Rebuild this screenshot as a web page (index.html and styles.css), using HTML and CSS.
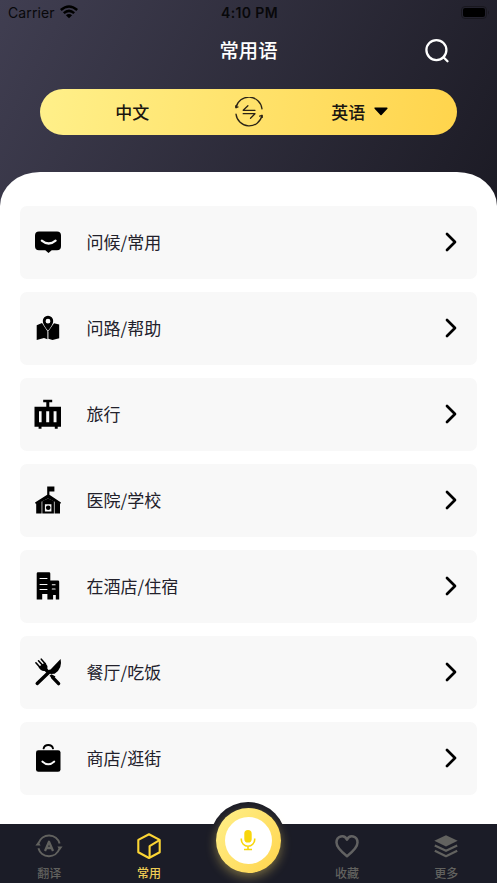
FILE: index.html
```html
<!DOCTYPE html>
<html lang="zh-CN">
<head>
<meta charset="utf-8">
<title>常用语</title>
<link rel="stylesheet" href="styles.css">
</head>
<body>
<div class="app">
  <div class="status">
    <div class="carrier"><span>Carrier</span>
      <svg width="18" height="14" viewBox="0 0 18 14" fill="none" stroke="#000" stroke-width="2.5"><path d="M.8 5Q9-2 17.2 5M3.8 8.1Q9 3.7 14.2 8.1"/><path d="M9 13.3 5.9 10.3Q9 7.9 12.1 10.3Z" fill="#000" stroke="none"/></svg>
    </div>
    <div class="time">4:10 PM</div>
    <svg class="battery" width="30" height="13" viewBox="0 0 30 13"><rect x=".5" y=".5" width="25" height="12" rx="3.5" fill="none" stroke="#19181f"/><rect x="2" y="2" width="22" height="9" rx="2" fill="#000"/><path d="M27 4.5q2 2 0 4z" fill="#19181f"/></svg>
  </div>
  <header class="header">
    <h1>常用语</h1>
    <svg class="search" width="26" height="26" viewBox="0 0 26 26" fill="none" stroke="#fff" stroke-width="2.3" stroke-linecap="round"><circle cx="12.4" cy="12.1" r="10"/><path d="m19.5 19.3 4 4"/></svg>
  </header>
  <div class="languages">
    <span class="lang">中文</span>
    <svg width="30" height="30" viewBox="0 0 30 30" fill="none" stroke="#2b2417" stroke-width="1.3" stroke-linecap="round" stroke-linejoin="round"><path d="M2 10.5A13.2 13.2 0 0 1 28 11.8M28 18.5A13.2 13.2 0 0 1 2 17.2"/><path d="m1.7 8.8.3 1.9 2-.8M28.3 20.3 28 18.4l-2.3.8"/><path d="M21 13.3H9.2l4.7-4.6M9.2 16.7H21l-4.5 4.5"/></svg>
    <span class="lang lang-to">英语<svg width="14" height="9" viewBox="0 0 14 9"><path d="M1.2 1.2h11.6L7 7.4Z" stroke="#000" stroke-width="1.6" stroke-linejoin="round"/></svg></span>
  </div>
  <main class="panel">
    <div class="row">
      <svg class="icon" viewBox="0 0 36 36"><path d="M9 7.4h18q4 0 4 4v10.8q0 4-4 4h-5.3L18.5 29l-3.2-2.8H9q-4 0-4-4V11.4q0-4 4-4Z"/><path class="light-line" stroke-width="2.2" d="M11.8 16.6q6.9 5.8 13.8 0"/></svg>
      <span class="label">问候/常用</span><svg class="chevron" viewBox="0 0 14 22"><path d="m3 3 8 8-8 8"/></svg>
    </div>
    <div class="row">
      <svg class="icon" viewBox="0 0 36 36"><path d="M6.7 15.2 12 13l5.4 8.2v8L14 28l-7.3 2Z"/><path d="m24 13.3 5.2 1.1v13.8L22.5 30l-4.1-1.3v-7.5Z"/><path fill-rule="evenodd" d="M18 5.8a5.2 5.2 0 0 1 5.2 5.3q0 3.6-5.2 9.7-5.2-6.1-5.2-9.7A5.2 5.2 0 0 1 18 5.8Zm0 3a2.4 2.4 0 1 0 0 4.8 2.4 2.4 0 0 0 0-4.8Z"/></svg>
      <span class="label">问路/帮助</span><svg class="chevron" viewBox="0 0 14 22"><path d="m3 3 8 8-8 8"/></svg>
    </div>
    <div class="row">
      <svg class="icon" viewBox="0 0 36 36"><path fill-rule="evenodd" d="M13.2 3.7h9v2.5h-2.9v4.5H31v20h-3.3v2h-2.9v-2H11.5v2H8.6v-2H4.5v-20h11.8V6.2h-3.1ZM9 15.2v11h2.6v-11Zm7.2 0v11h3v-11Zm7.4 0v11h2.9v-11Z"/></svg>
      <span class="label">旅行</span><svg class="chevron" viewBox="0 0 14 22"><path d="m3 3 8 8-8 8"/></svg>
    </div>
    <div class="row">
      <svg class="icon" viewBox="0 0 36 36"><path d="M17.2 4.6h7.2v5h-5v3.2L31 20.4l-1 1.8-12-5.6-12 5.6-1-1.8 12.2-7.6Z"/><path d="M6.2 21.7 11.6 19v12.4H6.2Zm23.8 0-5.4-2.7v12.4H30Z"/><path fill-rule="evenodd" d="m12.3 19 5.8-2.4 5.8 2.4v12.4H12.3Zm2.6 3.2v7.2h6.5v-7.2Z"/><circle cx="18.2" cy="25.7" r="2.3"/></svg>
      <span class="label">医院/学校</span><svg class="chevron" viewBox="0 0 14 22"><path d="m3 3 8 8-8 8"/></svg>
    </div>
    <div class="row">
      <svg class="icon" viewBox="0 0 36 36"><path d="M8 4.3h11q1.3 0 1.3 1.3v7H28q1.2 0 1.2 1.2v17.7h-3.4v-4.4h-2.7v4.4h-5.7v-5.6h-5.2v5.6H6.7V5.6q0-1.3 1.3-1.3Z"/><path class="light-line" stroke-width="1.1" d="M10 10.5h7M10 16.5h7m-7 5h7m5.3-4.8h2.8m-2.8 4.3h2.8"/></svg>
      <span class="label">在酒店/住宿</span><svg class="chevron" viewBox="0 0 14 22"><path d="m3 3 8 8-8 8"/></svg>
    </div>
    <div class="row">
      <svg class="icon" viewBox="0 0 36 36"><g fill="none" stroke="#000" stroke-linecap="round"><path stroke-width="3.4" d="m22.6 23.4 6 6.2"/><path stroke-width="3.4" d="M7.2 29.4 20 17.3"/><path stroke-width="1.6" d="m5.9 8.8 4.9 5.5M8.5 6.8l4.7 5.1M11.3 5.2l4.1 4.8"/></g><path d="m8.5 13 6.5-4.5q3 3 2.4 6.2l2.6 2.8-2.4 2.3-3-2.8Q11 17.5 8.5 13ZM30.6 5q2.2 9.4-6 14.8l-4 .2-2.2-2.3Z"/><path d="m19.5 21.7 2-1.5 4 2.4-2.8 2.5Z"/></svg>
      <span class="label">餐厅/吃饭</span><svg class="chevron" viewBox="0 0 14 22"><path d="m3 3 8 8-8 8"/></svg>
    </div>
    <div class="row">
      <svg class="icon" viewBox="0 0 36 36"><rect x="6" y="10.2" width="24.5" height="21.6" rx="2.4"/><path fill="none" stroke="#000" stroke-width="1.9" stroke-linecap="round" d="M13.6 8.4Q14.5 5 18.3 5T23 8.4"/><path class="light-line" stroke-width="1.8" d="M12.3 21.5q6 5.6 12 0"/></svg>
      <span class="label">商店/逛街</span><svg class="chevron" viewBox="0 0 14 22"><path d="m3 3 8 8-8 8"/></svg>
    </div>
  </main>
  <nav class="tabs">
    <div class="tab">
      <svg viewBox="0 0 28 28" fill="none" stroke="#62625f" stroke-width="2"><path d="M3.6 11A11 11 0 0 1 24.6 11.6M24.4 16.8A11 11 0 0 1 3.4 16.2"/><path d="M.4 13.4h5.2L3.4 9.6Zm27.2 1.2h-5.2l2.2 3.8Z" fill="#62625f" stroke="none"/><path d="m10 19 4-9.2 4 9.2M11.5 16h5" stroke-width="2.3" stroke-linejoin="round"/></svg>
      <span>翻译</span>
    </div>
    <div class="tab active">
      <svg viewBox="0 0 28 28" fill="none" stroke="#fcd535" stroke-width="2.1" stroke-linejoin="round"><path d="m14 2.2 10.7 5.7v12.4L14 26 3.3 20.3V7.9Z"/><path d="m24.5 8.2-9.9 5.9V25.6"/></svg>
      <span>常用</span>
    </div>
    <div class="tab tab-mic">
      <div class="mic-rim"><div class="mic-ring"><div class="mic-face">
        <svg width="20" height="22" viewBox="0 0 20 22"><rect x="6.3" y="1" width="7.4" height="12.6" rx="3.7" fill="#f8d60b"/><path d="M3.3 9.5v1a6.7 6.7 0 0 0 13.4 0v-1M10 17.2v3.2M6 20.5h8" fill="none" stroke="#f8d60b" stroke-width="1.6"/></svg>
      </div></div></div>
    </div>
    <div class="tab tab-right">
      <svg viewBox="0 0 28 28" fill="none" stroke="#626262" stroke-width="2.5" stroke-linejoin="round"><path d="M14 24.2Q3.5 16.2 3.5 10.6C3.5 3.8 11.5 2.3 14 7.6 16.5 2.3 24.5 3.8 24.5 10.6Q24.5 16.2 14 24.2Z"/></svg>
      <span>收藏</span>
    </div>
    <div class="tab tab-right">
      <svg viewBox="0 0 28 28" fill="none" stroke="#62625f" stroke-width="2.2" stroke-linejoin="round"><path d="m14 3.2 11.7 5.6L14 14.5 2.3 8.8Z" fill="#62625f" stroke="none"/><path d="M2.8 13.4 14 18.8l11.2-5.4M2.8 18.7 14 24.2l11.2-5.5"/></svg>
      <span>更多</span>
    </div>
  </nav>
</div>
</body>
</html>
```
FILE: styles.css
```css
* { box-sizing: border-box; }
body { margin: 0; }
svg { display: block; flex: none; }
.app {
  width: 497px;
  height: 883px;
  display: flex;
  flex-direction: column;
  overflow: hidden;
  background: linear-gradient(118deg, #403e51 0, #1c1b25 530px);
  font-family: "Noto Sans CJK SC", sans-serif;
}
.status {
  height: 25px;
  display: grid;
  grid-template-columns: 1fr auto 1fr;
  align-items: center;
  padding: 0 6px 0 8px;
  font: 14px/25px Inter, sans-serif;
  color: #08080a;
}
.carrier { display: flex; gap: 5px; align-items: center; letter-spacing: .1px; }
.carrier svg { margin-top: -1px; }
.time { font-weight: 600; letter-spacing: .35px; }
.battery { justify-self: end; }
.header {
  height: 63.5px;
  display: grid;
  grid-template-columns: 1fr auto 1fr;
  align-items: center;
  padding-bottom: 13px;
}
.header h1 { grid-column: 2; margin: 0; font-size: 19.3px; font-weight: 500; line-height: 28px; color: #fff; }
.search { margin: 1px 0 0 146.5px; }
.languages {
  height: 46.5px;
  margin: 0 40px;
  border-radius: 24px;
  display: grid;
  grid-template-columns: 1fr 30px 1fr;
  align-items: center;
  background: linear-gradient(100deg, #fff08a, #ffe26b 50%, #ffd44c);
  font-size: 17px;
  font-weight: 500;
  color: #191510;
}
.lang { display: flex; justify-content: center; align-items: center; padding-right: 9px; }
.lang-to { gap: 9px; padding: 0 1px 0 0; }
.panel {
  flex: 1;
  margin-top: 36.5px;
  padding: 34.5px 20.5px 0 20px;
  display: flex;
  flex-direction: column;
  gap: 13.5px;
  background: #fff;
  border-radius: 40px 40px 0 0 / 34px 34px 0 0;
}
.row {
  flex: none;
  height: 72.5px;
  display: flex;
  align-items: center;
  padding: 0 18.5px 0 10px;
  border-radius: 7px;
  background: #f8f8f8;
}
.icon { width: 36px; height: 36px; }
.light-line { fill: none; stroke: #f8f8f8; stroke-linecap: round; }
.label { flex: 1; margin-left: 20.5px; padding-bottom: 2px; font-size: 17px; color: #22212b; }
.chevron { width: 14px; height: 22px; fill: none; stroke: #000; stroke-width: 2.7; stroke-linecap: round; stroke-linejoin: round; }
.tabs {
  flex: none;
  height: 59px;
  display: grid;
  grid-template-columns: repeat(5, 1fr);
  background: #1b1c27;
}
.tab {
  display: flex;
  flex-direction: column;
  align-items: center;
  padding: 8px 1px 0 0;
  font-size: 12px;
  font-weight: 500;
  line-height: 18px;
  color: #62625f;
}
.tab > svg { width: 28px; height: 28px; }
.tab > span { margin-top: 4px; }
.tab.active { padding-right: 0; color: #efcd55; }
.tab.tab-right { padding-right: 2px; }
.tab.tab-mic { padding: 0; }
.mic-rim, .mic-ring, .mic-face { display: flex; align-items: center; justify-content: center; border-radius: 50%; flex: none; }
.mic-rim { width: 76px; height: 76px; margin-top: -22px; background: #1b1c27; }
.mic-ring { width: 65px; height: 65px; background: linear-gradient(130deg, #fff08a, #ffd44c); box-shadow: 0 4px 11px #ffe26b66; }
.mic-face { width: 47px; height: 47px; background: #fff; }
```
